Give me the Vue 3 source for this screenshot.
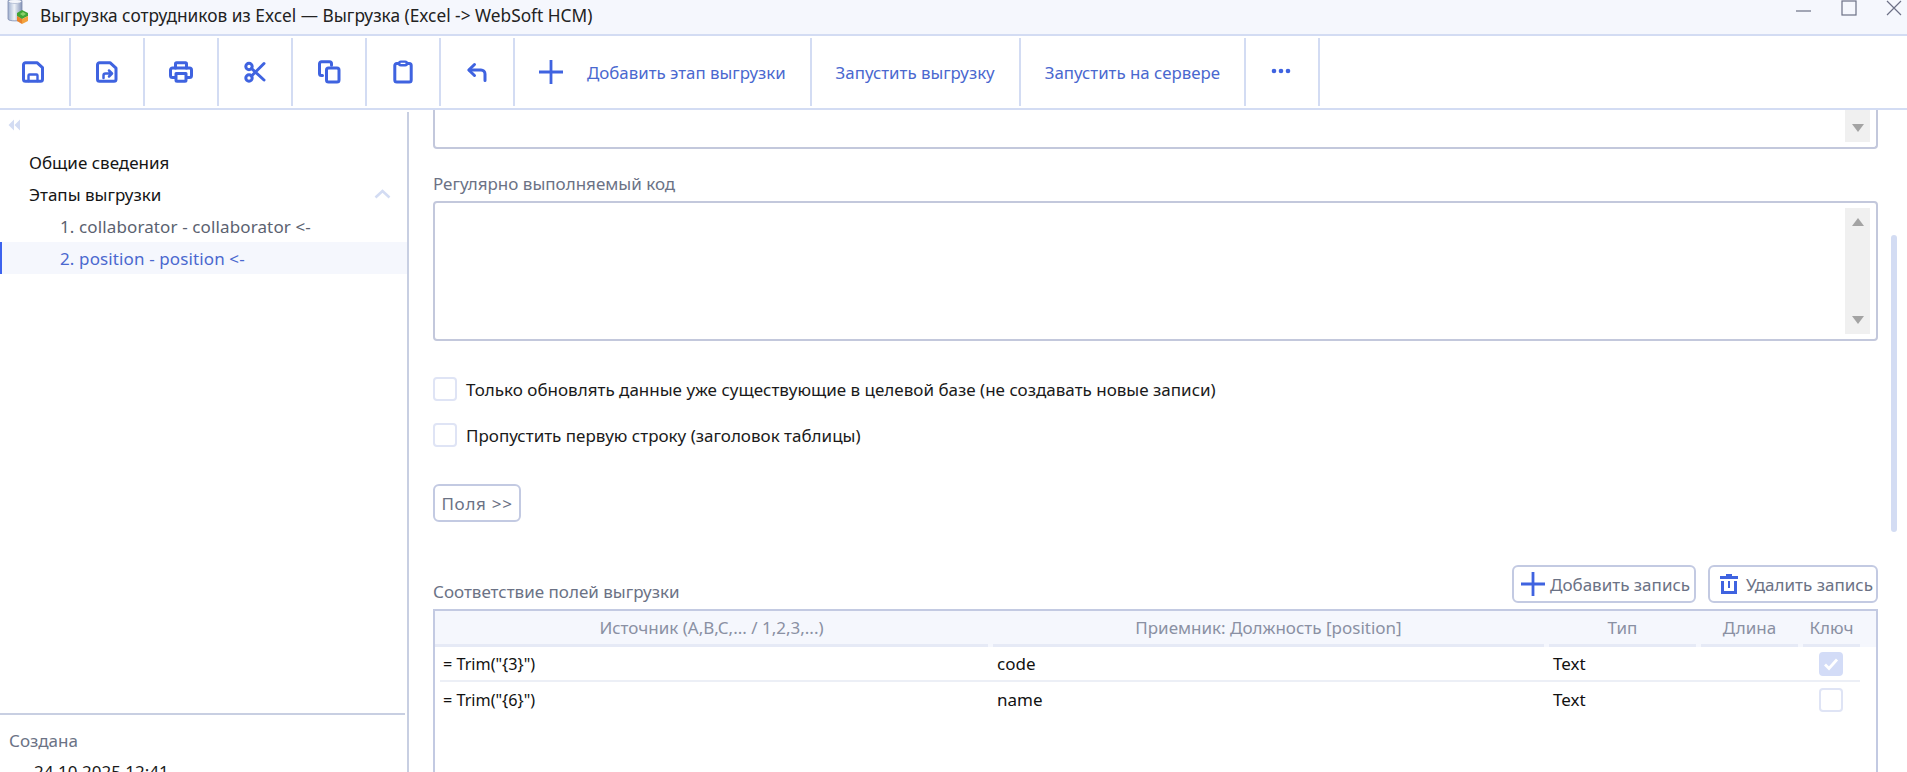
<script setup>
const iconButtons = ['save', 'saveAs', 'print', 'cut', 'copy', 'paste', 'undo']
const actions = ['Запустить выгрузку', 'Запустить на сервере']
const checks = [
  'Только обновлять данные уже существующие в целевой базе (не создавать новые записи)',
  'Пропустить первую строку (заголовок таблицы)'
]
const columns = ['Источник (A,B,C,... / 1,2,3,...)', 'Приемник: Должность [position]', 'Тип', 'Длина', 'Ключ']
const rows = [
  { source: '= Trim("{3}")', target: 'code', type: 'Text', key: true },
  { source: '= Trim("{6}")', target: 'name', type: 'Text', key: false }
]
</script>

<template>
  <div class="app">
    <header class="titlebar">
      <svg class="app-icon" width="24" height="28" viewBox="0 0 24 28">
        <defs>
          <linearGradient id="cyl" x1="0" x2="1" y1="0" y2="0">
            <stop offset="0" stop-color="#9fb0cf" />
            <stop offset="0.45" stop-color="#eef2f8" />
            <stop offset="1" stop-color="#8494b8" />
          </linearGradient>
        </defs>
        <path d="M1 3c0-3 14-3 14 0v18c0 2.500-14 2.500-14 0z" fill="url(#cyl)" stroke="#7d8bad" stroke-width="0.8" />
        <ellipse cx="8" cy="3.500" rx="6.500" ry="2" fill="#f4f6fb" stroke="#9aa7c4" stroke-width="0.6" />
        <path d="M10 15l5-3 6 3v3l-6 3-5-3z" fill="#3fa535" />
        <path d="M10 18l5 3v5l-5-3z" fill="#e8812b" />
        <path d="M15 21l6-3v5l-6 3z" fill="#f2a13c" />
        <path d="M13 16l3-2 3 2-3 2z" fill="#8ad06a" />
      </svg>
      <span class="title">Выгрузка сотрудников из Excel — Выгрузка (Excel -&gt; WebSoft HCM)</span>
      <div class="win-controls">
        <svg width="16" height="16" viewBox="0 0 16 16"><path d="M0 11h15" stroke="#6c7086" stroke-width="1.2" /></svg>
        <svg width="16" height="16" viewBox="0 0 16 16"><rect x="1" y="1" width="14" height="14" fill="none" stroke="#6c7086" stroke-width="1.2" /></svg>
        <svg width="16" height="16" viewBox="0 0 16 16"><path d="M1 1l14 14M15 1L1 15" stroke="#6c7086" stroke-width="1.2" /></svg>
      </div>
    </header>

    <nav class="toolbar">
      <div v-for="name in iconButtons" :key="name" class="tool icon-tool">
        <svg width="24" height="24" viewBox="0 0 24 24" fill="none" stroke="#3f63e0" stroke-width="3" stroke-linecap="round" stroke-linejoin="round">
          <template v-if="name === 'save'">
            <path d="M4.500 2.700H16l5.500 5v11.600a2 2 0 0 1-2 2h-15a2 2 0 0 1-2-2V4.700a2 2 0 0 1 2-2z" />
            <path d="M7.500 21v-5.500a1 1 0 0 1 1-1h7a1 1 0 0 1 1 1V21" stroke-width="2.400" />
          </template>
          <template v-else-if="name === 'saveAs'">
            <path d="M4.500 2.700H15l6 5.500v11a2 2 0 0 1-2 2H4.500a2 2 0 0 1-2-2V4.700a2 2 0 0 1 2-2z" />
            <path d="M8.500 18v-2.500a2 2 0 0 1 2-2H16.500M14 10.500l3 3-3 3" stroke-width="2.500" />
          </template>
          <template v-else-if="name === 'print'">
            <path d="M6.500 8V3.800a1 1 0 0 1 1-1h9a1 1 0 0 1 1 1V8" />
            <path d="M6 17.500H3.500a2 2 0 0 1-2-2V10a2 2 0 0 1 2-2h17a2 2 0 0 1 2 2v5.500a2 2 0 0 1-2 2H18" />
            <path d="M7 13.500h10v6.700a1 1 0 0 1-1 1H8a1 1 0 0 1-1-1z" />
          </template>
          <template v-else-if="name === 'cut'">
            <circle cx="6" cy="6.500" r="3.200" />
            <circle cx="6" cy="18" r="3.200" />
            <path d="M8.500 8.500L21 20M8.500 16L21 3.500" />
          </template>
          <template v-else-if="name === 'copy'">
            <path d="M5.500 15.500h-1a2 2 0 0 1-2-2V3.800a2 2 0 0 1 2-2h8a2 2 0 0 1 2 2v1.400" />
            <rect x="9.500" y="8" width="12.500" height="14" rx="2" />
          </template>
          <template v-else-if="name === 'paste'">
            <path d="M8 3.500H5.800a2 2 0 0 0-2 2V20a2 2 0 0 0 2 2h12.400a2 2 0 0 0 2-2V5.500a2 2 0 0 0-2-2H16" />
            <rect x="8" y="1.600" width="8" height="3.600" rx="1.800" stroke-width="2.400" />
          </template>
          <template v-else>
            <path d="M9.500 4.500L3.800 10l5.700 5.500" />
            <path d="M4.500 10h11.500a4 4 0 0 1 4 4v6.500" />
          </template>
        </svg>
      </div>
      <div class="tool text-tool">
        <svg class="plus" width="24" height="24" viewBox="0 0 24 24"><path d="M12 0v24M0 12h24" stroke="#3f63e0" stroke-width="2.800" /></svg>
        <span>Добавить этап выгрузки</span>
      </div>
      <div v-for="label in actions" :key="label" class="tool text-tool">{{ label }}</div>
      <div class="tool more">
        <svg width="20" height="6" viewBox="0 0 20 6" fill="#3f63e0"><circle cx="3" cy="3" r="2.300" /><circle cx="10" cy="3" r="2.300" /><circle cx="17" cy="3" r="2.300" /></svg>
      </div>
    </nav>

    <div class="body">
      <aside class="sidebar">
        <svg class="collapse" width="12" height="12" viewBox="0 0 12 12" fill="#d3dcf3"><path d="M6 0.500v11L0.500 6zM12 0.500v11L6.500 6z" /></svg>
        <div class="tree">
          <div class="tree-item">Общие сведения</div>
          <div class="tree-item with-chevron">
            <span class="branch">Этапы выгрузки</span>
            <svg width="17" height="10" viewBox="0 0 17 10" fill="none"><path d="M1.500 8.500L8.500 2l7 6.500" stroke="#d3dcf3" stroke-width="2.600" /></svg>
          </div>
          <div class="tree-item sub">1. collaborator - collaborator &lt;-</div>
          <div class="tree-item sub active">2. position - position &lt;-</div>
        </div>
        <div class="meta">
          <div class="meta-label">Создана</div>
          <div class="meta-value">24.10.2025 12:41</div>
        </div>
      </aside>

      <main class="content">
        <div class="code-box clipped">
          <div class="code-scroll"><i class="tri down"></i></div>
        </div>
        <div class="field-label">Регулярно выполняемый код</div>
        <div class="code-box tall">
          <div class="code-scroll between"><i class="tri up"></i><i class="tri down"></i></div>
        </div>

        <label v-for="text in checks" :key="text" class="check-row">
          <span class="check"></span>
          <span>{{ text }}</span>
        </label>

        <button class="btn fields">Поля &gt;&gt;</button>

        <div class="table-head">
          <span class="field-label flush">Соответствие полей выгрузки</span>
          <div class="table-actions">
            <button class="btn add">
              <svg width="24" height="24" viewBox="0 0 24 24"><path d="M12 0v24M0 12h24" stroke="#3f63e0" stroke-width="2.800" /></svg>
              Добавить запись
            </button>
            <button class="btn del">
              <svg width="18" height="20" viewBox="0 0 18 20" fill="#3f63e0"><path d="M6 0h6v2h6v3H0V2h6z" /><path d="M1 7h3v10h10V7h3v13H1z" /><path d="M8 7h2v7H8z" /></svg>
              Удалить запись
            </button>
          </div>
        </div>

        <div class="grid-table">
          <div class="grid-row header">
            <div v-for="c in columns" :key="c" class="th">{{ c }}</div>
          </div>
          <div v-for="r in rows" :key="r.target" class="grid-row data">
            <div class="td source">{{ r.source }}</div>
            <div class="td">{{ r.target }}</div>
            <div class="td">{{ r.type }}</div>
            <div class="td"></div>
            <div class="td center">
              <span class="check" :class="{ on: r.key }">
                <svg v-if="r.key" width="16" height="14" viewBox="0 0 16 14" fill="none"><path d="M2 7.500l4 4 8-9" stroke="#fff" stroke-width="2.800" /></svg>
              </span>
            </div>
          </div>
        </div>

        <div class="main-scroll"></div>
      </main>
    </div>
  </div>
</template>

<style scoped>
.app {
  width: 1907px;
  height: 772px;
  overflow: hidden;
  display: flex;
  flex-direction: column;
  background: #fff;
  font-family: "Noto Sans", "Open Sans", sans-serif;
  font-size: 17px;
  color: #1a1a1a;
}
.titlebar {
  height: 34px;
  flex: none;
  display: flex;
  align-items: flex-start;
  background: #f5f7fd;
  border-bottom: 2px solid #d3dcf3;
  overflow: hidden;
  padding-left: 7px;
}
.app-icon { flex: none; margin-top: -2px; }
.title { margin-left: 9px; line-height: 32px; font-size: 17.300px; color: #222; white-space: nowrap; }
.win-controls {
  margin-left: auto;
  display: flex;
  gap: 29px;
  padding-right: 5px;
}
.toolbar {
  height: 72px;
  flex: none;
  display: flex;
  align-items: center;
  border-bottom: 2px solid #d3dcf3;
  margin-left: -3px;
  box-sizing: content-box;
}
.tool {
  height: 68px;
  display: flex;
  align-items: center;
  justify-content: center;
  border-right: 2px solid #d3dcf3;
  box-sizing: border-box;
  flex: none;
  color: #4a68cf;
}
.icon-tool { width: 74px; }
.text-tool { padding: 0 24px; gap: 24px; white-space: nowrap; font-size: 16.850px; }
.more { width: 74px; }
.more svg { margin-top: -2px; margin-left: -2px; }
.plus { flex: none; }
.body { flex: 1; display: flex; min-height: 0; }
.sidebar {
  width: 409px;
  flex: none;
  box-sizing: border-box;
  margin-top: 2px;
  border-right: 2px solid #c8cfe2;
  display: flex;
  flex-direction: column;
}
.collapse { margin: 7px 0 0 8px; flex: none; }
.tree { margin-top: 15px; flex: 1; }
.tree-item {
  height: 32px;
  line-height: 34px;
  padding-left: 29px;
  color: #151515;
}
.with-chevron { display: flex; justify-content: space-between; align-items: center; padding-right: 16px; }
.branch { padding-top: 1px; line-height: 32px; }
.sub { padding-left: 60px; color: #5b6270; letter-spacing: 0.12px; }
.active { color: #4a68cf; background: #f5f7fd; border-left: 2px solid #3d63ee; padding-left: 58px; }
.meta { border-top: 2px solid #c8cfe2; margin-right: 2px; height: 59px; flex: none; padding: 14px 0 0 9px; box-sizing: border-box; overflow: hidden; }
.meta-label { color: #6b7285; line-height: 24px; }
.meta-value { padding-left: 25px; line-height: 24px; margin-top: 7px; }
.content {
  flex: 1;
  position: relative;
  padding: 0 29px 0 24px;
  overflow: hidden;
}
.code-box {
  border: 2px solid #c3c8dc;
  border-radius: 4px;
  box-sizing: border-box;
  display: flex;
  justify-content: flex-end;
  padding: 5px 6px;
}
.clipped { height: 39px; border-top: none; border-radius: 0 0 4px 4px; padding-top: 0; }
.tall { height: 140px; }
.code-scroll {
  width: 25px;
  background: #f0f0f0;
  display: flex;
  flex-direction: column;
  align-items: center;
  justify-content: flex-end;
  padding: 10px 0;
  box-sizing: border-box;
}
.between { justify-content: space-between; }
.tri { display: block; width: 0; height: 0; border-left: 6px solid transparent; border-right: 6px solid transparent; }
.tri.up { border-bottom: 8px solid #a3a3a3; }
.tri.down { border-top: 8px solid #a3a3a3; }
.field-label { color: #6b7285; line-height: 22px; margin: 24px 0 6px; }
.flush { margin: 0; }
.check-row { display: flex; align-items: center; gap: 9px; height: 24px; margin-bottom: 22px; color: #1a1a1a; }
.code-box.tall + .check-row { margin-top: 36px; }
.check {
  width: 24px;
  height: 24px;
  flex: none;
  box-sizing: border-box;
  border: 2px solid #dfe4f5;
  border-radius: 4px;
  background: #fff;
  display: inline-flex;
  align-items: center;
  justify-content: center;
}
.check.on { background: #d3dcf7; border-color: #d3dcf7; }
.btn {
  font: inherit;
  background: #fff;
  border: 2px solid #c3cae2;
  border-radius: 6px;
  color: #6b7285;
  height: 38px;
  box-sizing: border-box;
  display: inline-flex;
  align-items: center;
  white-space: nowrap;
  padding: 0;
}
.fields { width: 88px; justify-content: center; margin-top: 37px; display: flex; letter-spacing: 0.7px; }
.table-head { display: flex; justify-content: space-between; align-items: flex-end; margin-top: 43px; }
.table-head .flush { line-height: 22px; margin-bottom: 0; }
.table-actions { display: flex; gap: 12px; }
.add { width: 184px; padding-left: 7px; gap: 5px; }
.del { width: 170px; padding-left: 10px; gap: 8px; }
.grid-table {
  margin-top: 6px;
  border: 2px solid #c3cae2;
  height: 300px;
  box-sizing: border-box;
}
.grid-row {
  display: grid;
  grid-template-columns: 553px 551px 147px 97px 57px;
  column-gap: 5px;
}
.header { background: #f5f7fd; height: 36px; }
.th {
  text-align: center;
  line-height: 33px;
  color: #8a90a3;
  border-bottom: 3px solid #e6eaf6;
  height: 36px;
  box-sizing: border-box;
}
.data { height: 35px; margin-left: 5px; width: 1420px; grid-template-columns: 548px 551px 147px 97px 57px; border-bottom: 2px solid #eceff6; box-sizing: border-box; align-items: center; }
.data:last-child { border-bottom: none; }
.td { padding-left: 4px; color: #111; }
.source { font-size: 16.200px; padding-left: 3px; }
.center { padding: 0 2px 0 0; display: flex; justify-content: center; }
.main-scroll {
  position: absolute;
  right: 10px;
  top: 125px;
  width: 6px;
  height: 297px;
  background: #d3dcf3;
  border-radius: 3px;
}
</style>
